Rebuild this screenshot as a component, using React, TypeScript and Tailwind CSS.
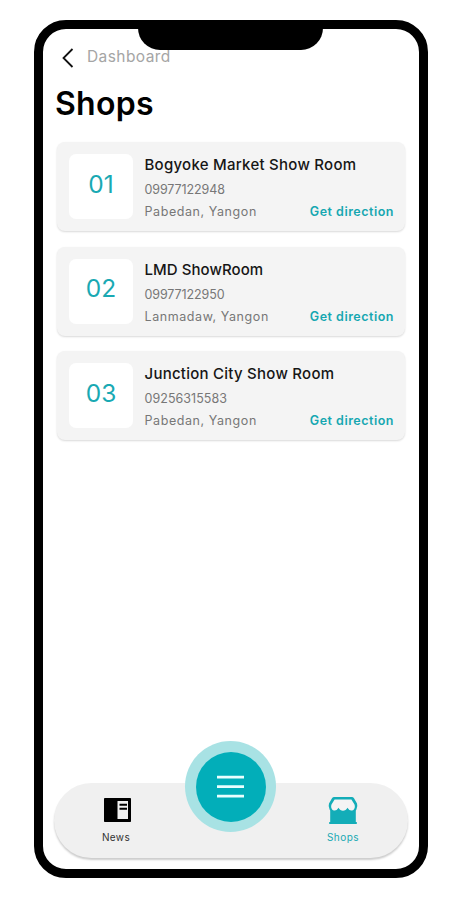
const shops = [
  { no: "01", name: "Bogyoke Market Show Room", phone: "09977122948", place: "Pabedan, Yangon", nameCls: "tracking-[0.26px]", phoneCls: "tracking-[-0.1px]" },
  { no: "02", name: "LMD ShowRoom", phone: "09977122950", place: "Lanmadaw, Yangon", nameCls: "tracking-[0.06px]", phoneCls: "tracking-[-0.1px]" },
  { no: "03", name: "Junction City Show Room", phone: "09256315583", place: "Pabedan, Yangon", nameCls: "tracking-[0.25px]", phoneCls: "tracking-[0.04px]" },
];

function ShopCard({ shop }: { shop: (typeof shops)[number] }) {
  return (
    <article className="flex h-[89px] rounded-[8px] bg-[#f4f4f4] pt-[12px] pr-[11px] pl-[12px] shadow-[0_1px_2px_rgba(0,0,0,0.15)]">
      <div className="flex h-[65px] w-[64px] shrink-0 items-center justify-center rounded-[7px] bg-white pb-[5px] text-[24.5px] leading-none text-[#19a9b3]">
        {shop.no}
      </div>
      <div className="ml-[11.5px] min-w-0 flex-1 whitespace-nowrap">
        <h2 className={`h-[24px] text-[15px] leading-[21px] font-medium text-[#161616] ${shop.nameCls}`}>{shop.name}</h2>
        <p className={`h-[22px] text-[12.5px] leading-[23px] text-[#777] ${shop.phoneCls}`}>{shop.phone}</p>
        <div className="flex h-[25px] items-center justify-between text-[12.5px]">
          <span className="tracking-[0.58px] text-[#777]">{shop.place}</span>
          <a className="font-semibold tracking-[0.5px] text-[#16a7b1]">Get direction</a>
        </div>
      </div>
    </article>
  );
}

function NewsIcon() {
  return (
    <svg width="27" height="24" viewBox="0 0 27 24" fill="none">
      <rect width="27" height="24" rx="0.8" fill="#000" />
      <path d="M13.5 3H24V21H13.5Z" fill="#f1f1f1" />
      <path d="M15.5 6.7H23M15.5 10.7H23" stroke="#000" strokeWidth="2" />
    </svg>
  );
}

function StoreIcon() {
  return (
    <svg width="30" height="27" viewBox="0 0 30 27" fill="none">
      <path
        d="M6.2 0H23.8Q25.2 0 26 1.3L29 6.6Q30 9.5 28.4 12.4L27.8 13.4V25H28.8V27H1.2V25H2.2V13.4L1.6 12.4Q0 9.5 1 6.6L4 1.3Q4.8 0 6.2 0Z"
        fill="#13adb8"
      />
      <path
        d="M6.6 2.4H23.4L26.5 7.6Q27.6 10.8 25.4 12.9Q21.8 14.8 19.4 10.8C17.8 14.8 12.2 14.8 10.6 10.8Q8.2 14.8 4.6 12.9Q2.4 10.8 3.5 7.6Z"
        fill="#f4f4f4"
      />
    </svg>
  );
}

export default function App() {
  return (
    <div className="h-[900px] w-[461px] overflow-hidden bg-white pt-[20px] pl-[34px] font-[Inter,sans-serif]">
      <main className="relative flex h-[858px] w-[394px] flex-col rounded-[32px] border-[9px] border-black bg-white">
        <header className="h-[113px] pl-[12px]">
          <div className="flex items-center pt-[16px]">
            <svg className="ml-[7px]" width="12" height="24" viewBox="0 0 12 24" fill="none">
              <path d="M10.5 4L1.5 13L10.5 22" stroke="#111" strokeWidth="1.8" />
            </svg>
            <span className="ml-[13px] h-[24px] text-[15.5px] leading-[23px] tracking-[0.42px] text-[#a5a5a5]">Dashboard</span>
          </div>
          <h1 className="mt-[16px] text-[32px] leading-[38px] font-semibold tracking-[0.3px] text-black">Shops</h1>
        </header>
        <section className="flex flex-col gap-[15.5px] pr-[14px] pl-[14px]">
          {shops.map((s) => (
            <ShopCard key={s.no} shop={s} />
          ))}
        </section>
        <nav className="mt-auto mr-[11px] mb-[11px] ml-[11px] flex h-[75px] shrink-0 justify-between rounded-full bg-[#f0f0f0] shadow-[0_2px_2px_rgba(0,0,0,0.2)]">
          <div className="flex w-[126px] flex-col items-center pt-[15px] text-[10px] leading-[14px] text-[#333]">
            <NewsIcon />
            <span className="mt-[8px] mr-[2px] tracking-[0.4px]">News</span>
          </div>
          <div className="flex w-[130px] flex-col items-center pt-[14px] text-[10px] leading-[14px] text-[#18a9b3]">
            <StoreIcon />
            <span className="mt-[6px] tracking-[0.5px]">Shops</span>
          </div>
        </nav>
        <div className="absolute top-[-1px] left-[95px] h-[22px] w-[185px] rounded-b-[22px] bg-black" />
        <button className="absolute bottom-[37px] left-[142px] flex h-[91px] w-[91px] items-center justify-center rounded-full bg-[#a8e2e4]">
          <span className="flex h-[70px] w-[70px] items-center justify-center rounded-full bg-[#02aeb9]">
            <svg width="27" height="24" viewBox="0 0 27 24" fill="none">
              <path d="M0 2.2H27M0 11.7H27M0 21.2H27" stroke="#eaffff" strokeWidth="2.8" />
            </svg>
          </span>
        </button>
      </main>
    </div>
  );
}
